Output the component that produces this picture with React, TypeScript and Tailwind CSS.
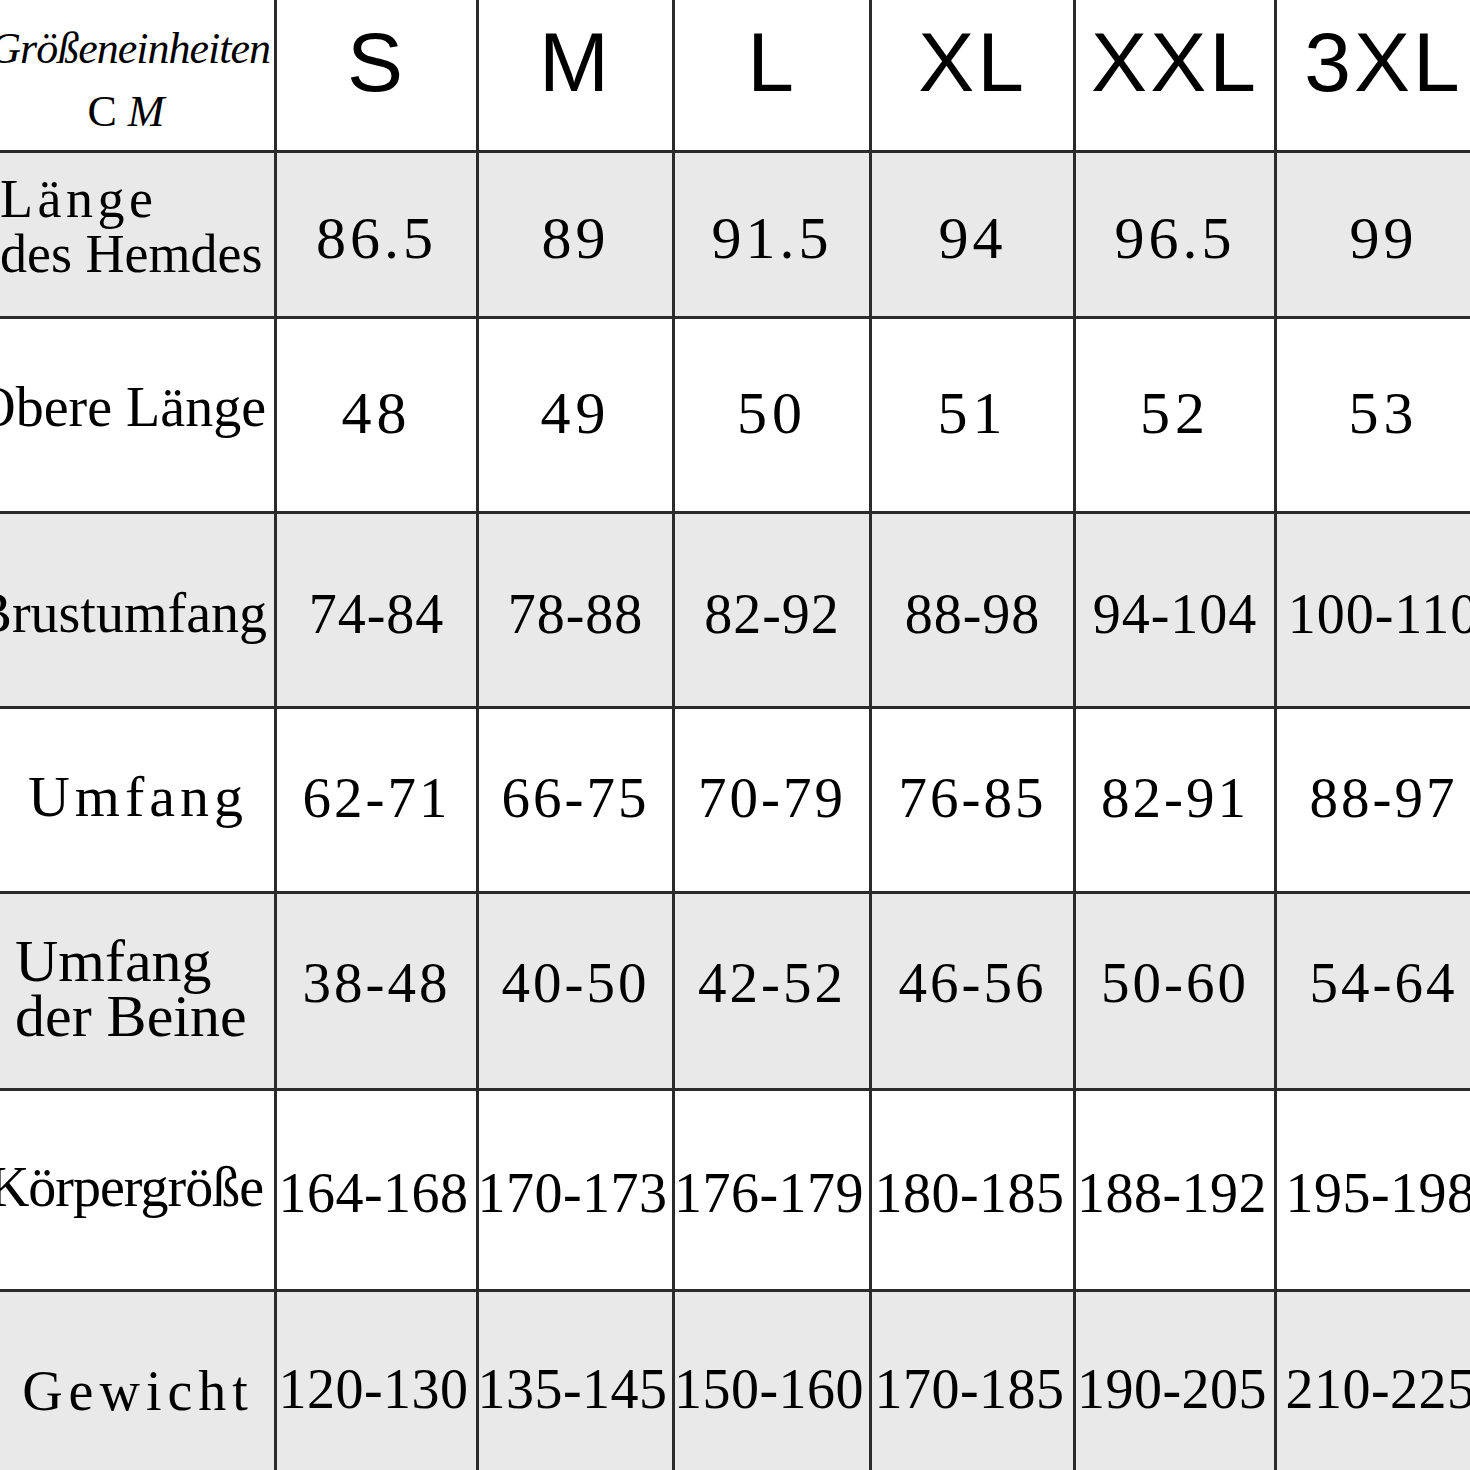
const sizes = ["S", "M", "L", "XL", "XXL", "3XL"];

type Row = {
  bg: string;
  label: React.ReactNode;
  labelBox: string;
  numBox: string;
  numText: string;
  values: string[];
};

const rows: Row[] = [
  {
    bg: "bg-[#e9e9e9]",
    label: (
      <div className="text-[54px] leading-[55px]">
        <div className="tracking-[4.5px]">Länge</div>
        <div>des Hemdes</div>
      </div>
    ),
    labelBox: "justify-start pt-[19px]",
    numBox: "pt-[55px]",
    numText: "text-[60px] tracking-[4px]",
    values: ["86.5", "89", "91.5", "94", "96.5", "99"],
  },
  {
    bg: "bg-white",
    label: <div className="text-[56px] leading-none whitespace-nowrap">Obere Länge</div>,
    labelBox: "justify-end pr-[8px] pt-[60px]",
    numBox: "pt-[64px]",
    numText: "text-[60px] tracking-[5px]",
    values: ["48", "49", "50", "51", "52", "53"],
  },
  {
    bg: "bg-[#e9e9e9]",
    label: <div className="text-[56px] leading-none whitespace-nowrap">Brustumfang</div>,
    labelBox: "justify-end pr-[7px] pt-[71px]",
    numBox: "pt-[72px]",
    numText: "text-[56px] tracking-[1px]",
    values: ["74-84", "78-88", "82-92", "88-98", "94-104", "100-110"],
  },
  {
    bg: "bg-white",
    label: <div className="text-[58px] leading-none tracking-[5px] pl-[2px]">Umfang</div>,
    labelBox: "justify-center pt-[59px]",
    numBox: "pt-[60px]",
    numText: "text-[57px] tracking-[3px]",
    values: ["62-71", "66-75", "70-79", "76-85", "82-91", "88-97"],
  },
  {
    bg: "bg-[#e9e9e9]",
    label: (
      <div className="text-[60px] leading-[55px] whitespace-nowrap">
        <div>Umfang</div>
        <div>der Beine</div>
      </div>
    ),
    labelBox: "justify-start pl-[15px] pt-[40px]",
    numBox: "pt-[60px]",
    numText: "text-[57px] tracking-[3px]",
    values: ["38-48", "40-50", "42-52", "46-56", "50-60", "54-64"],
  },
  {
    bg: "bg-white",
    label: <div className="text-[56px] leading-none whitespace-nowrap tracking-[-1px]">Körpergröße</div>,
    labelBox: "justify-end pr-[11px] pt-[68px]",
    numBox: "pt-[74px] pr-[6px]",
    numText: "text-[56px] tracking-[0.5px]",
    values: ["164-168", "170-173", "176-179", "180-185", "188-192", "195-198"],
  },
  {
    bg: "bg-[#e9e9e9]",
    label: <div className="text-[56px] leading-none tracking-[6px] pl-[2px]">Gewicht</div>,
    labelBox: "justify-center pt-[71px]",
    numBox: "pt-[69px] pr-[6px]",
    numText: "text-[56px] tracking-[0.5px]",
    values: ["120-130", "135-145", "150-160", "170-185", "190-205", "210-225"],
  },
];

export default function App() {
  return (
    <div className="w-[1470px] h-[1470px] overflow-hidden bg-white font-['Liberation_Serif',serif] text-black">
      <div className="grid w-max grid-cols-[274px_199px_193px_194px_201px_198px_213px] grid-rows-[150px_163px_192px_192px_182px_194px_198px_200px] gap-[3px] bg-[#2b2b2b]">
        <div className="bg-white overflow-hidden flex flex-col">
          <div className="pt-[27px] pr-[4px] flex justify-end text-[44px] leading-none italic tracking-[-1px] whitespace-nowrap">
            Größeneinheiten
          </div>
          <div className="mt-[19px] w-[252px] text-center text-[44px] leading-none">
            C <span className="italic">M</span>
          </div>
        </div>
        {sizes.map((s) => (
          <div
            key={s}
            className="bg-white overflow-hidden flex justify-center pt-[20px] font-['Liberation_Sans',Arial,sans-serif] text-[84px] leading-none tracking-[3px] whitespace-nowrap"
          >
            {s}
          </div>
        ))}
        {rows.map((r, i) => (
          <div key={i} className="contents">
            <div className={`${r.bg} ${r.labelBox} overflow-hidden flex items-start`}>{r.label}</div>
            {r.values.map((v, j) => (
              <div
                key={j}
                className={`${r.bg} ${r.numBox} ${r.numText} overflow-hidden flex justify-center items-start leading-none whitespace-nowrap`}
              >
                {v}
              </div>
            ))}
          </div>
        ))}
      </div>
    </div>
  );
}
